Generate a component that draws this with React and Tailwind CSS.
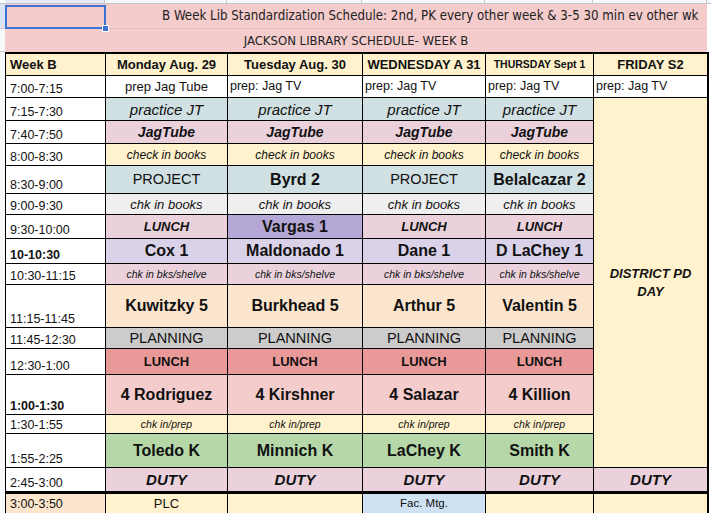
const F = "font-['Liberation_Sans',Arial,sans-serif]";

const S = {
  prepC: "bg-white justify-center text-[13px]",
  prepL: "bg-white justify-start pl-[2px] text-[12.5px]",
  practice: "bg-[#d0e0e3] justify-center italic text-[15px]",
  jag: "bg-[#ead1dc] justify-center italic font-bold text-[14px]",
  check: "bg-[#fff2cc] justify-center italic text-[12px]",
  project: "bg-[#d0e0e3] justify-center text-[14.5px]",
  projectName: "bg-[#d0e0e3] justify-center font-bold text-[16px]",
  chk: "bg-[#efefef] justify-center italic text-[13px]",
  lunchPink: "bg-[#ead1dc] justify-center italic font-bold text-[13px]",
  vargas: "bg-[#b4a7d6] justify-center font-bold text-[16px]",
  lav: "bg-[#d9d2e9] justify-center font-bold text-[16px]",
  shelve: "bg-[#ead1dc] justify-center italic text-[10.5px]",
  peach: "bg-[#fce5cd] justify-center font-bold text-[16px]",
  planning: "bg-[#cccccc] justify-center text-[14.5px]",
  lunchRed: "bg-[#ea9999] justify-center font-bold text-[13px]",
  rose: "bg-[#f4cccc] justify-center font-bold text-[16px]",
  prep: "bg-[#fff2cc] justify-center italic text-[10.5px]",
  green: "bg-[#b6d7a8] justify-center font-bold text-[16px]",
  duty: "bg-[#ead1dc] justify-center italic font-bold text-[15px]",
};

const four = (v, s) => [v, v, v, v].map((x) => [x, s]);

const rows = [
  {
    t: "7:00-7:15",
    c: [
      ["prep Jag Tube", S.prepC],
      ["prep: Jag TV", S.prepL],
      ["prep: Jag TV", S.prepL],
      ["prep: Jag TV", S.prepL],
      ["prep: Jag TV", S.prepL],
    ],
  },
  { t: "7:15-7:30", c: four("practice JT", S.practice) },
  { t: "7:40-7:50", c: four("JagTube", S.jag) },
  { t: "8:00-8:30", c: four("check in books", S.check) },
  {
    t: "8:30-9:00",
    c: [
      ["PROJECT", S.project],
      ["Byrd 2", S.projectName],
      ["PROJECT", S.project],
      ["Belalcazar 2", S.projectName],
    ],
  },
  { t: "9:00-9:30", c: four("chk in books", S.chk) },
  {
    t: "9:30-10:00",
    c: [
      ["LUNCH", S.lunchPink],
      ["Vargas 1", S.vargas],
      ["LUNCH", S.lunchPink],
      ["LUNCH", S.lunchPink],
    ],
  },
  {
    t: "10-10:30",
    bold: true,
    c: [
      ["Cox 1", S.lav],
      ["Maldonado 1", S.lav],
      ["Dane 1", S.lav],
      ["D LaChey 1", S.lav],
    ],
  },
  { t: "10:30-11:15", c: four("chk in bks/shelve", S.shelve) },
  {
    t: "11:15-11:45",
    c: [
      ["Kuwitzky 5", S.peach],
      ["Burkhead 5", S.peach],
      ["Arthur 5", S.peach],
      ["Valentin 5", S.peach],
    ],
  },
  { t: "11:45-12:30", c: four("PLANNING", S.planning) },
  { t: "12:30-1:00", c: four("LUNCH", S.lunchRed) },
  {
    t: "1:00-1:30",
    bold: true,
    c: [
      ["4 Rodriguez", S.rose],
      ["4 Kirshner", S.rose],
      ["4 Salazar", S.rose],
      ["4 Killion", S.rose],
    ],
  },
  { t: "1:30-1:55", c: four("chk in/prep", S.prep) },
  {
    t: "1:55-2:25",
    c: [
      ["Toledo K", S.green],
      ["Minnich K", S.green],
      ["LaChey K", S.green],
      ["Smith K", S.green],
    ],
  },
  { t: "2:45-3:00", c: [...four("DUTY", S.duty), ["DUTY", S.duty]] },
];

const headers = [
  ["Monday Aug. 29", "text-[13px]"],
  ["Tuesday Aug. 30", "text-[13px]"],
  ["WEDNESDAY A 31", "text-[13px]"],
  ["THURSDAY Sept 1", "text-[10.5px]"],
  ["FRIDAY S2", "text-[13px]"],
];

export default function App() {
  return (
    <div className={`w-[711px] h-[513px] overflow-hidden bg-white text-[#111] ${F}`}>
      <div className="flex h-[4px] bg-[#f8f9fa] border-b border-[#c7c7c7]">
        <div className="w-[5px]" />
        <div className="w-[100px] bg-[#e3eaf6] border-r border-[#c7c7c7]" />
        <div className="w-[122px] border-r border-[#c7c7c7]" />
        <div className="w-[135px] border-r border-[#c7c7c7]" />
        <div className="w-[123px] border-r border-[#c7c7c7]" />
        <div className="w-[108px] border-r border-[#c7c7c7]" />
        <div className="w-[114px] border-r border-[#c7c7c7]" />
      </div>

      <div className="flex">
        <div className="w-[5px] flex flex-col bg-[#f8f9fa]">
          <div className="h-[25px] bg-[#dbe4f5] border-b border-[#c7c7c7]" />
          <div className="h-[23px] border-b border-[#c7c7c7]" />
        </div>

        <div className="flex flex-col">
          <div className="relative w-[702px] h-[25px] bg-[#f4cccc] border-b border-[#e9bdbd] flex items-center pl-[157px]">
            <span className="whitespace-nowrap font-['DejaVu_Sans_Condensed','DejaVu_Sans',sans-serif] font-stretch-condensed text-[13.2px] text-[#222]">
              B Week Lib Standardization Schedule: 2nd, PK every other week &amp; 3-5 30 min ev other wk
            </span>
            <div className="absolute left-0 top-[1px] w-[101px] h-[24px] border-2 border-[#3b73d6]">
              <div className="absolute -right-[5px] -bottom-[5px] w-[7px] h-[7px] bg-[#3b73d6] border border-white" />
            </div>
          </div>
          <div className="w-[702px] h-[23px] bg-[#f4cccc] flex items-center justify-center">
            <span className="whitespace-nowrap font-['DejaVu_Sans_Condensed','DejaVu_Sans',sans-serif] font-stretch-condensed text-[13px] text-[#222]">
              JACKSON LIBRARY SCHEDULE- WEEK B
            </span>
          </div>

          <div className="grid w-[704px] grid-cols-[99px_121px_134px_122px_107px_113px] grid-rows-[21px_21px_22px_22px_21px_27px_20px_23px_24px_20px_42px_20px_25px_39px_18px_33px_23px] gap-px bg-black border-t-2 border-b-[3px] border-l border-r-2 border-black">
            <div className="col-start-6 row-start-3 row-span-14 bg-[#fff2cc] flex items-center justify-center text-center italic font-bold text-[13px] leading-[18px]">
              DISTRICT PD
              <br />
              DAY
            </div>

            <div className="bg-[#fff2cc] flex items-center pl-[4px] font-bold text-[13px]">Week B</div>
            {headers.map(([h, size]) => (
              <div key={h} className={`bg-[#fff2cc] flex items-center justify-center font-bold whitespace-nowrap ${size}`}>
                {h}
              </div>
            ))}

            {rows.map((r) => [
              <div
                key={r.t}
                className={`bg-white flex items-end pl-[4px] pb-[2px] text-[12.5px] leading-none ${r.bold ? "font-bold" : ""}`}
              >
                {r.t}
              </div>,
              ...r.c.map(([v, s], i) => (
                <div key={r.t + i} className={`flex items-center whitespace-nowrap overflow-hidden leading-none ${s}`}>
                  {v}
                </div>
              )),
            ])}
          </div>

          <div className="grid w-[704px] h-[20px] grid-cols-[99px_121px_134px_122px_107px_113px] gap-px bg-black border-l border-r-2 border-black">
            <div className="bg-[#fce5cd] flex items-center pl-[4px] text-[12.5px]">3:00-3:50</div>
            <div className="bg-[#fff2cc] flex items-center justify-center text-[13px]">PLC</div>
            <div className="bg-[#fff2cc]" />
            <div className="bg-[#cfe2f3] flex items-center justify-center text-[11.5px]">Fac. Mtg.</div>
            <div className="bg-[#fff2cc]" />
            <div className="bg-[#fff2cc]" />
          </div>
        </div>
      </div>
    </div>
  );
}
